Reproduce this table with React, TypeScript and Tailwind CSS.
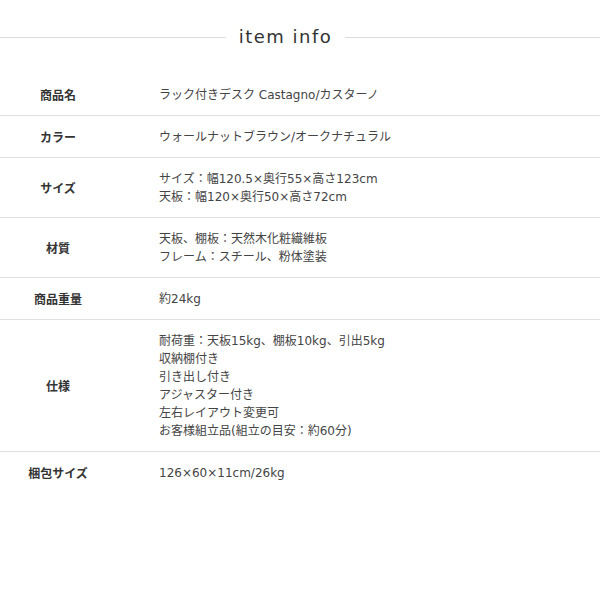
const rows: { label: string; lines: string[] }[] = [
  { label: '商品名', lines: ['ラック付きデスク Castagno/カスターノ'] },
  { label: 'カラー', lines: ['ウォールナットブラウン/オークナチュラル'] },
  { label: 'サイズ', lines: ['サイズ：幅120.5×奥行55×高さ123cm', '天板：幅120×奥行50×高さ72cm'] },
  { label: '材質', lines: ['天板、棚板：天然木化粧繊維板', 'フレーム：スチール、粉体塗装'] },
  { label: '商品重量', lines: ['約24kg'] },
  {
    label: '仕様',
    lines: [
      '耐荷重：天板15kg、棚板10kg、引出5kg',
      '収納棚付き',
      '引き出し付き',
      'アジャスター付き',
      '左右レイアウト変更可',
      'お客様組立品(組立の目安：約60分)',
    ],
  },
  { label: '梱包サイズ', lines: ['126×60×11cm/26kg'] },
];

export default function App() {
  return (
    <div className="w-[600px] h-[600px] bg-white font-['DejaVu_Sans','Noto_Sans_CJK_JP',sans-serif]">
      {/* 見出し */}
      <div className="flex items-center h-[74px]">
        <div className="w-[226px] h-px bg-[#dcdcdc]" />
        <h2 className="w-[119px] text-center text-[18px] leading-none tracking-[1.5px] text-[#333] font-['DejaVu_Sans',sans-serif]">
          item info
        </h2>
        <div className="flex-1 h-px bg-[#dcdcdc]" />
      </div>

      <div>
        {rows.map((row, i) => (
          <div
            key={row.label}
            className={
              i < rows.length - 1
                ? 'flex items-center border-b border-[#e0e0e0] pt-3 pb-[11px]'
                : 'flex items-center pt-3 pb-[11px]'
            }
          >
            <div className="w-[116px] text-center text-[12px] leading-[18px] font-bold text-[#333] font-['Noto_Sans_CJK_JP',sans-serif]">
              {row.label}
            </div>
            <div className="pl-[43px] text-[12px] leading-[18px] text-[#444]">
              {row.lines.map((l) => (
                <div key={l}>{l}</div>
              ))}
            </div>
          </div>
        ))}
      </div>
    </div>
  );
}
